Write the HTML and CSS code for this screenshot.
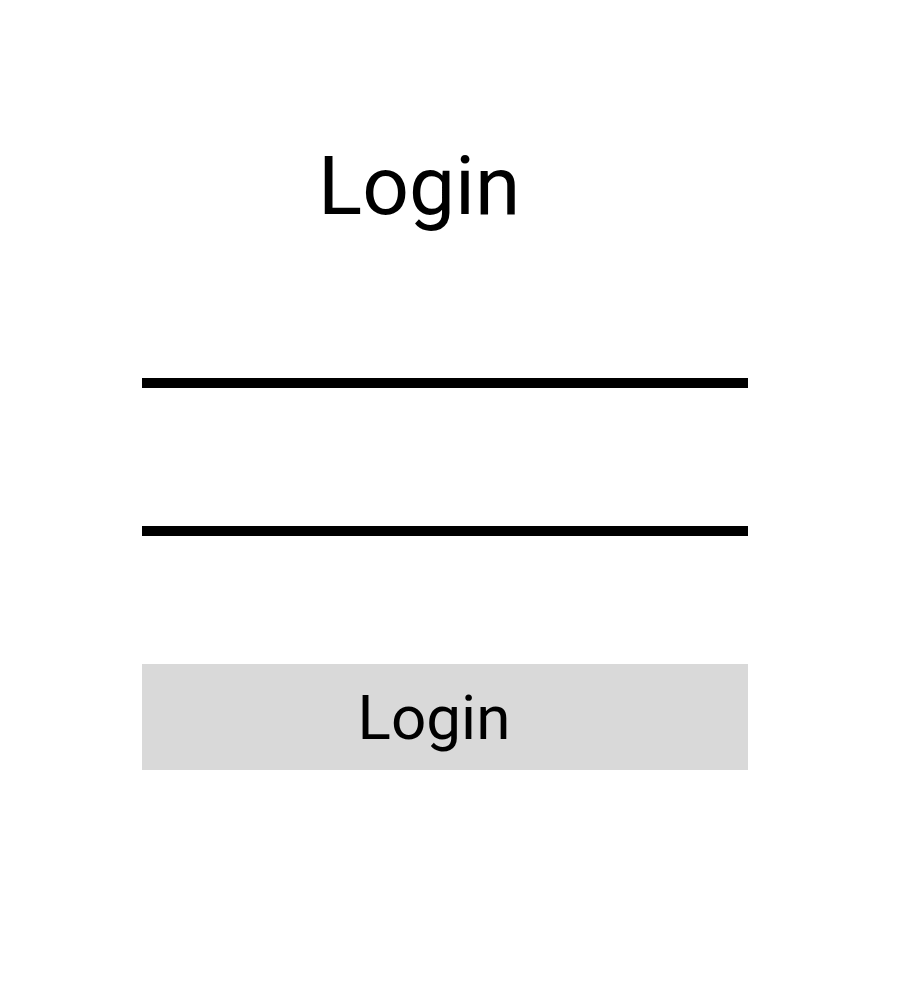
FILE: index.html
```html
<!DOCTYPE html>
<html lang="en">
<head>
  <meta charset="UTF-8">
  <title>Login</title>
  <meta name="viewport" content="width=device-width, initial-scale=1.0">
  <link rel="stylesheet" href="styles.css">
</head>
<body>

  <div class="login-box">
    <!-- title -->
    <h1 class="title">Login</h1>

    <!-- fields -->
    <input class="field" type="text" aria-label="username">
    <input class="field" type="password" aria-label="password">

    <!-- submit -->
    <button class="login-btn">Login</button>
  </div>

</body>
</html>
```

FILE: styles.css
```css
body {
  margin: 0;
  background: #fff;
  color: #000;
  font-family: Roboto, sans-serif;
}

.login-box {
  width: 606px;
  margin-left: 142px;
  padding-top: 131px;
  display: flex;
  flex-direction: column;
}

.title {
  margin: 0 0 0 176px;
  font-size: 82px;
  font-weight: 400;
  line-height: 110px;
}

.field {
  height: 110px;
  margin-top: 27px;
  padding: 0;
  border: none;
  border-bottom: 10px solid #000;
  background: transparent;
  outline: none;
}

.field + .field {
  margin-top: 28px;
}

.login-btn {
  margin-top: 128px;
  height: 106px;
  border: none;
  background: #d9d9d9;
  color: #000;
  font-family: Roboto, sans-serif;
  font-size: 62px;
  padding: 0;
  text-indent: -22px;
  cursor: pointer;
}
```
